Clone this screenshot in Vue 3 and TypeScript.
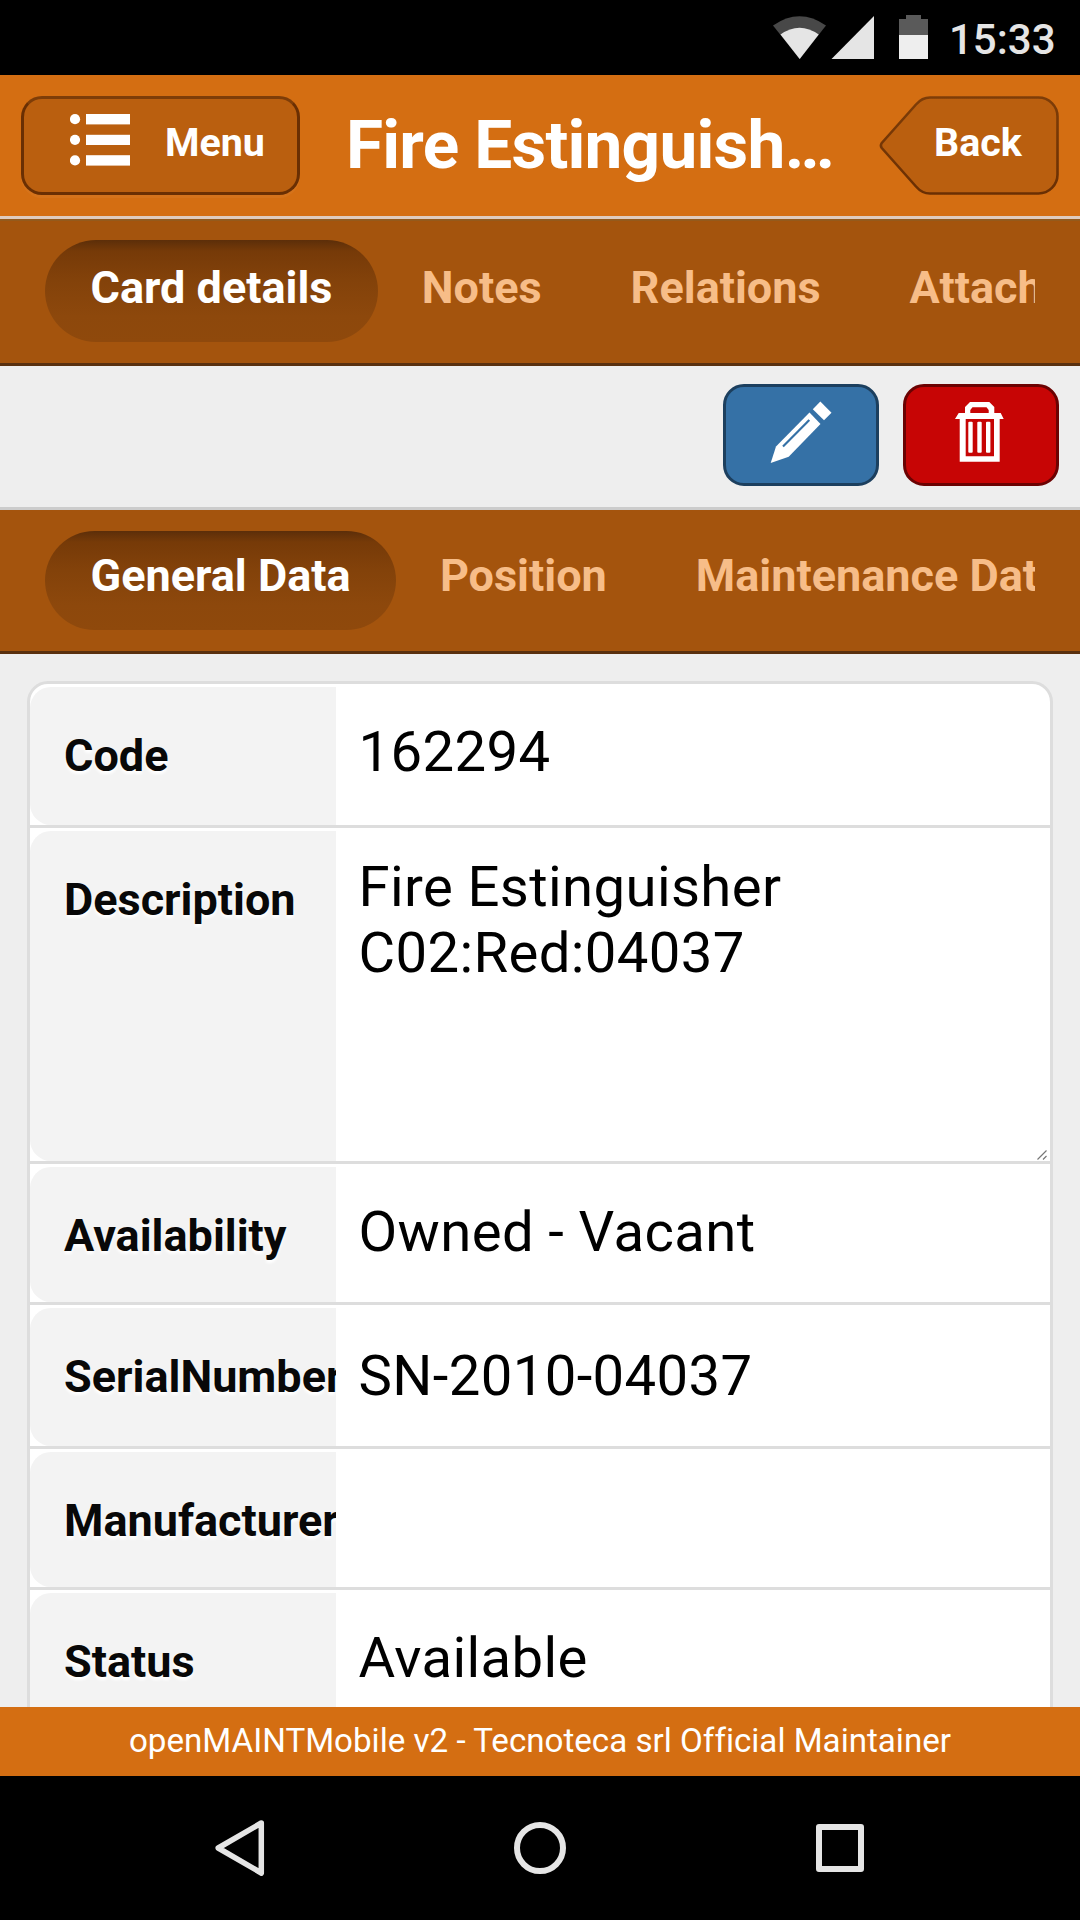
<script setup lang="ts">
import { ref } from 'vue'

interface Field {
  label: string
  value: string
  height: number
  pad: number
  multiline?: boolean
}

const cardTabs = ['Card details', 'Notes', 'Relations', 'Attachments']
const groupTabs = ['General Data', 'Position', 'Maintenance Data']
const activeCardTab = ref(0)
const activeGroupTab = ref(0)

const fields: Field[] = [
  { label: 'Code', value: '162294', height: 144, pad: 35 },
  { label: 'Description', value: 'Fire Estinguisher\nC02:Red:04037', height: 336, pad: 26, multiline: true },
  { label: 'Availability', value: 'Owned - Vacant', height: 141, pad: 35 },
  { label: 'SerialNumber', value: 'SN-2010-04037', height: 144, pad: 38 },
  { label: 'Manufacturer', value: '', height: 141, pad: 35 },
  { label: 'Status', value: 'Available', height: 144, pad: 35 },
]
</script>

<template>
  <div class="screen">
    <div class="statusbar">
      <svg class="status-icons" width="160" height="75" viewBox="770 0 160 75">
        <path d="M773 25.5 Q799.5 7 826 25.5 L799.7 59 Z" fill="#484848" />
        <path d="M780.5 34.5 Q799.5 21 818.7 34.5 L799.7 59 Z" fill="#e5e5e5" />
        <path d="M874 16 V59 H831.5 Z" fill="#e5e5e5" />
        <path d="M899 35 V19 H906 V15 H921 V19 H928 V35 Z" fill="#5a5a5a" />
        <path d="M899 35 H928 V59 H899 Z" fill="#eee" />
      </svg>
      <span class="clock">15:33</span>
    </div>

    <header class="header">
      <button class="menu-btn">
        <svg width="60" height="52" viewBox="0 0 60 52" fill="#fff">
          <circle cx="5" cy="5.2" r="5.1" /><rect x="16" y="0" width="44" height="10.4" />
          <circle cx="5" cy="25.8" r="5.1" /><rect x="16" y="20.8" width="44" height="10.2" />
          <circle cx="5" cy="46.4" r="5.1" /><rect x="16" y="41.2" width="44" height="10.4" />
        </svg>
        <span>Menu</span>
      </button>
      <h1 class="title">Fire Estinguish…</h1>
      <button class="back-btn">
        <svg class="back-shape" width="180" height="99" viewBox="0 0 180 99">
          <defs>
            <linearGradient id="edge" x1="0" y1="0" x2="0" y2="1">
              <stop offset="0" stop-color="#7e3d08" />
              <stop offset="1" stop-color="#6a2f03" />
            </linearGradient>
          </defs>
          <path d="M51 1.5H159.500a19 19 0 0 1 19 19V78.500a19 19 0 0 1 -19 19H51Q43 97.500 37 90.500L2.800 52Q1 49.500 2.800 47L37 8.500Q43 1.500 51 1.500Z" fill="#ba5f0f" stroke="url(#edge)" stroke-width="2.600" />
        </svg>
        <span>Back</span>
      </button>
    </header>

    <nav class="tabs tabs-card">
      <div class="strip">
        <a v-for="(t, i) in cardTabs" :key="t" class="tab" :class="{ active: i === activeCardTab }" @click="activeCardTab = i">{{ t }}</a>
      </div>
    </nav>

    <div class="toolbar">
      <button class="tool edit" aria-label="Edit">
        <svg width="150" height="96" viewBox="3 3 150 96">
          <path d="M97.300 17.500L108.500 28.700L101 36.300L89.800 25.300Z" fill="#fff" />
          <path d="M86.500 28.500L97.500 40L65.700 72.700L47.700 79L53 62.500Z" fill="#fff" />
          <path d="M86.300 36L60 62.500" stroke="#3571a6" stroke-width="2.200" />
        </svg>
      </button>
      <button class="tool remove" aria-label="Delete">
        <svg width="150" height="96" viewBox="3 3 150 96" fill="#fff">
          <path fill-rule="evenodd" d="M62 29V23L67 18H86.300L91.300 23V29H97.700L100.700 35H96.700V77.700H56.700V35H52L55.700 29ZM67.300 29H85.700V26L83.500 23.300H69.500L67.300 26ZM62.700 35V72.300H91V35Z" />
          <rect x="65.300" y="37.700" width="4.400" height="31" rx="1" />
          <rect x="74.300" y="37.700" width="4.400" height="31" rx="1" />
          <rect x="83" y="37.700" width="4.400" height="31" rx="1" />
        </svg>
      </button>
    </div>

    <nav class="tabs tabs-group">
      <div class="strip">
        <a v-for="(t, i) in groupTabs" :key="t" class="tab" :class="{ active: i === activeGroupTab }" @click="activeGroupTab = i">{{ t }}</a>
      </div>
    </nav>

    <main class="content">
      <div class="form">
        <div v-for="f in fields" :key="f.label" class="row" :style="{ height: f.height + 'px' }">
          <div class="label">{{ f.label }}</div>
          <div class="value" :style="{ paddingTop: f.pad + 'px' }">{{ f.value }}</div>
          <svg v-if="f.multiline" class="grip" width="10" height="10" viewBox="0 0 10 10" stroke="#777" stroke-width="1.200">
            <path d="M0.500 9.500L9.500 0.500M6 9.500L9.500 6" />
          </svg>
        </div>
      </div>
    </main>

    <footer class="footer">openMAINTMobile v2 - Tecnoteca srl Official Maintainer</footer>

    <div class="navbar">
      <svg width="60" height="60" viewBox="0 0 60 60" fill="none" stroke="#e5e5e5" stroke-width="5.500" stroke-linejoin="round">
        <path d="M51.300 5L8.200 30L51.300 55Z" />
      </svg>
      <svg width="60" height="60" viewBox="0 0 60 60" fill="none" stroke="#e5e5e5" stroke-width="6">
        <circle cx="30" cy="30" r="23" />
      </svg>
      <svg width="60" height="60" viewBox="0 0 60 60" fill="none" stroke="#e5e5e5" stroke-width="6" stroke-linejoin="round">
        <rect x="9" y="9" width="42" height="42" />
      </svg>
    </div>
  </div>
</template>

<style>
body {
  background: #000;
}
</style>

<style scoped>
.screen {
  width: 1080px;
  height: 1920px;
  display: flex;
  flex-direction: column;
  overflow: hidden;
  background: #eee;
  font-family: Roboto, "Liberation Sans", sans-serif;
}
.screen * {
  box-sizing: border-box;
}
button {
  font: inherit;
  margin: 0;
  padding: 0;
}
.statusbar {
  flex: none;
  height: 75px;
  background: #000;
  display: flex;
  justify-content: flex-end;
  padding-right: 24px;
}
.clock {
  width: 107px;
  margin-left: 19px;
  font-size: 42px;
  font-weight: 500;
  line-height: 80px;
  color: #e5e5e5;
  white-space: nowrap;
}
.header {
  flex: none;
  height: 144px;
  display: flex;
  align-items: flex-start;
  padding: 21px 21px 0;
  background: #d46e12;
  border-bottom: 3px solid #dfccbe;
}
.menu-btn {
  flex: none;
  width: 279px;
  height: 99px;
  display: flex;
  align-items: flex-start;
  padding: 15px 0 0 46px;
  border: 3px solid #6a2f03;
  border-top-color: #7e3d08;
  border-radius: 21px;
  background: #ba5f0f;
  box-shadow: 0 3px 0 rgba(255, 255, 255, 0.04);
  color: #fff;
}
.menu-btn span {
  margin: 6px 0 0 35px;
  font-size: 39.400px;
  font-weight: 700;
  line-height: 46px;
}
.title {
  flex: 1;
  min-width: 0;
  margin: 9px 0 0;
  padding-left: 46px;
  font-size: 67.500px;
  font-weight: 700;
  line-height: 80px;
  letter-spacing: -0.780px;
  color: #fff;
  white-space: nowrap;
}
.back-btn {
  position: relative;
  width: 180px;
  height: 99px;
  flex: none;
  border: 0;
  background: none;
  color: #fff;
  text-align: left;
  display: flex;
  align-items: flex-start;
}
.back-shape {
  position: absolute;
  left: 0;
  top: 0;
}
.back-btn span {
  position: relative;
  margin: 24px 0 0 55px;
  font-size: 39.400px;
  font-weight: 700;
  line-height: 46px;
}
.tabs {
  flex: none;
  background: #a4540d;
  border-bottom: 3px solid #59300f;
  padding: 0 45px;
}
.tabs-card {
  height: 147px;
  padding-top: 19px;
  border-top: 2px solid #945a1c;
}
.tabs-group {
  height: 144px;
  padding-top: 21px;
}
.strip {
  display: flex;
  overflow: hidden;
}
.tab {
  flex: none;
  height: 102px;
  padding: 21px 44px 0 45px;
  border-radius: 51px;
  font-size: 45px;
  font-weight: 700;
  line-height: 53px;
  color: #f7bd88;
  white-space: nowrap;
}
.tabs-group .tab {
  height: 99px;
  padding-top: 18px;
}
.tab.active {
  padding-left: 45.500px;
  padding-right: 45.500px;
  margin-right: -1.200px;
  color: #fff;
  background: linear-gradient(#5c2e09 0%, #763a08 11%, #83420a 40%, #8d480c 75%, #8f490c 100%);
}
.toolbar {
  flex: none;
  height: 144px;
  display: flex;
  justify-content: flex-end;
  gap: 24px;
  padding: 18px 21px 0;
  background: #eee;
  border-bottom: 3px solid #ccc;
}
.tool {
  width: 156px;
  height: 102px;
  border-radius: 21px;
  overflow: hidden;
}
.tool svg {
  display: block;
}
.edit {
  background: #3571a6;
  border: 3px solid #1c3f5e;
}
.remove {
  background: #c70505;
  border: 3px solid #6b0202;
}
.content {
  flex: 1;
  min-height: 0;
  overflow: hidden;
  padding: 27px 27px 0;
}
.form {
  border: 3px solid #ddd;
  border-radius: 21px;
  background: #fff;
  overflow: hidden;
}
.row {
  position: relative;
  display: flex;
  padding-top: 3px;
  border-bottom: 3px solid #ddd;
}
.label {
  flex: none;
  width: 306px;
  padding: 42px 0 0 34px;
  overflow: hidden;
  border-radius: 21px 0 0 21px;
  background: #f3f3f3;
  font-size: 45px;
  font-weight: 700;
  line-height: 53px;
  color: #080808;
  text-shadow: 0 3px 3px #fff;
  white-space: nowrap;
}
.value {
  flex: 1;
  margin-top: -3px;
  padding-left: 22.500px;
  font-size: 56.250px;
  line-height: 66px;
  letter-spacing: 0.380px;
  color: #000;
  white-space: pre-line;
}
.grip {
  position: absolute;
  right: 3px;
  bottom: 1px;
}
.footer {
  flex: none;
  height: 69px;
  background: #d46e12;
  color: #fff;
  font-size: 33.150px;
  font-variant-ligatures: none;
  line-height: 67px;
  text-align: center;
}
.navbar {
  flex: none;
  height: 144px;
  display: flex;
  justify-content: center;
  align-items: center;
  gap: 240px;
  background: #000;
}
</style>
